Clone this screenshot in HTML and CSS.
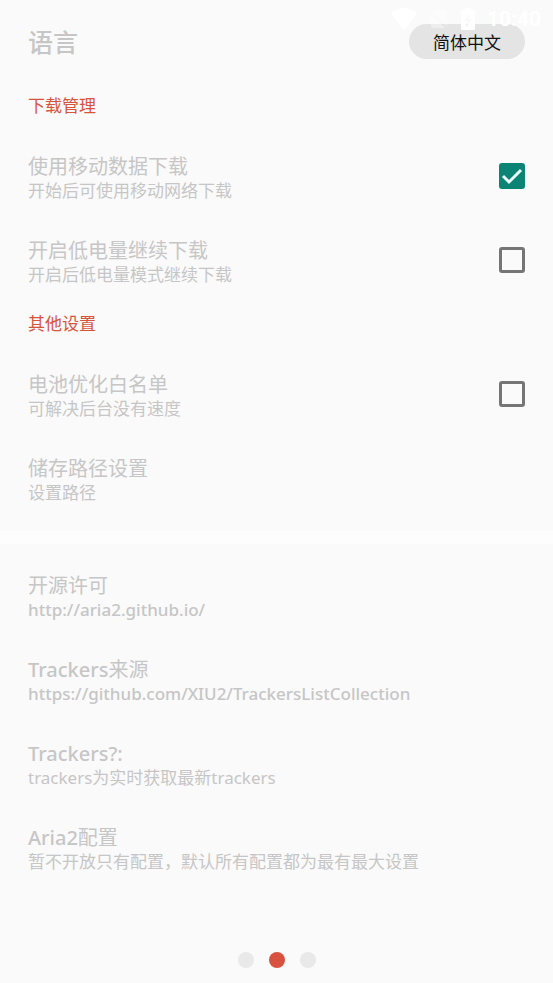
FILE: index.html
```html
<!DOCTYPE html>
<html lang="zh-CN">
<head>
<meta charset="utf-8">
<meta name="viewport" content="width=device-width, initial-scale=1">
<title>设置</title>
<link rel="stylesheet" href="styles.css">
</head>
<body>

<div class="statusbar">
	<svg class="wifi" viewBox="0 0 26 22" aria-hidden="true"><path d="M0 5Q13-5 26 5L13 22Z"/></svg>
	<svg class="nosim" viewBox="0 0 16 20" aria-hidden="true"><path d="M5 1h9q2 0 2 2v14L3 4ZM0 5l14 14H2q-2 0-2-2Z"/></svg>
	<svg class="battery" viewBox="0 0 14 22" aria-hidden="true"><path fill-rule="evenodd" d="M4 0h6v2h3q1 0 1 1v18q0 1-1 1H1q-1 0-1-1V3q0-1 1-1h3ZM9 5L3 13h3l-1 6l6-8H8Z"/></svg>
	<span class="clock">10:40</span>
</div>

<header class="header">
	<h1>语言</h1>
	<button class="lang" type="button">简体中文</button>
</header>

<main>
	<h2 class="section">下载管理</h2>
	<div class="row">
		<label class="text" for="mobile">
			<span class="name">使用移动数据下载</span>
			<span class="desc">开始后可使用移动网络下载</span>
		</label>
		<input class="check" type="checkbox" id="mobile" checked>
	</div>
	<div class="row">
		<label class="text" for="lowpower">
			<span class="name">开启低电量继续下载</span>
			<span class="desc">开启后低电量模式继续下载</span>
		</label>
		<input class="check" type="checkbox" id="lowpower">
	</div>

	<h2 class="section">其他设置</h2>
	<div class="row">
		<label class="text" for="whitelist">
			<span class="name">电池优化白名单</span>
			<span class="desc">可解决后台没有速度</span>
		</label>
		<input class="check" type="checkbox" id="whitelist">
	</div>
	<div class="row">
		<div class="text">
			<span class="name">储存路径设置</span>
			<span class="desc">设置路径</span>
		</div>
	</div>

	<hr class="band">

	<a class="row" href="http://aria2.github.io/">
		<span class="text">
			<span class="name">开源许可</span>
			<span class="desc latin">http://aria2.github.io/</span>
		</span>
	</a>
	<a class="row" href="https://github.com/XIU2/TrackersListCollection">
		<span class="text">
			<span class="name"><span class="latin">Trackers</span>来源</span>
			<span class="desc latin">https://github.com/XIU2/TrackersListCollection</span>
		</span>
	</a>
	<div class="row">
		<div class="text">
			<span class="name latin">Trackers?:</span>
			<span class="desc">trackers为实时获取最新trackers</span>
		</div>
	</div>
	<div class="row">
		<div class="text">
			<span class="name"><span class="latin">Aria2</span>配置</span>
			<span class="desc">暂不开放只有配置，默认所有配置都为最有最大设置</span>
		</div>
	</div>
</main>

<nav class="dots">
	<button type="button" class="dot" aria-label="1"></button>
	<button type="button" class="dot active" aria-label="2"></button>
	<button type="button" class="dot" aria-label="3"></button>
</nav>

</body>
</html>
```
FILE: styles.css
```css
* {
	box-sizing: border-box;
}

body {
	margin: 0;
	min-height: 100vh;
	display: flex;
	flex-direction: column;
	background: #fafafa;
	color: #c6c6c6;
	font-family: "Noto Sans", "Noto Sans CJK SC", sans-serif;
}

/* system icons, drawn over the header */
.statusbar {
	position: absolute;
	top: 7px;
	right: 12px;
	display: flex;
	align-items: center;
	color: #fff;
	pointer-events: none;
}

.statusbar svg {
	fill: #fff;
}

.wifi {
	width: 26px;
	height: 22px;
	margin-right: 14px;
}

.nosim {
	width: 16px;
	height: 20px;
	margin-right: 14px;
	opacity: 0.4;
}

.battery {
	width: 14px;
	height: 22px;
	margin-right: 12px;
}

.clock {
	font: 700 21px/24px Roboto, sans-serif;
}

.header {
	display: flex;
	align-items: center;
	justify-content: space-between;
	padding: 23px 28px 27px;
}

h1 {
	margin: 0;
	padding-top: 2px;
	font-size: 25px;
	line-height: 35px;
	font-weight: 500;
}

.lang {
	width: 116px;
	height: 35px;
	border: 0;
	border-radius: 18px;
	background: #e4e4e4;
	color: #111;
	font-family: inherit;
	font-size: 17px;
}

.section {
	margin: 7px 28px 19px;
	color: #d8533b;
	font-size: 17px;
	line-height: 24px;
	font-weight: 400;
}

.row {
	display: flex;
	justify-content: space-between;
	align-items: center;
	padding: 18px 28px;
	color: inherit;
	text-decoration: none;
}

.text {
	display: flex;
	flex-direction: column;
}

.name {
	font-size: 20px;
	line-height: 24px;
}

.desc {
	font-size: 17px;
	line-height: 24px;
}

.latin {
	font-weight: 500;
}

.check {
	appearance: none;
	width: 26px;
	height: 26px;
	margin: 0 0 6px;
	border: 3px solid #757575;
	border-radius: 3px;
}

.check:checked {
	border: 0;
	background: #0b8375 url("data:image/svg+xml,%3Csvg xmlns='http://www.w3.org/2000/svg' viewBox='0 0 26 26'%3E%3Cpath d='M4 13l6 6L22 7' fill='none' stroke='%23e8fffc' stroke-width='3'/%3E%3C/svg%3E");
}

.band {
	width: 100%;
	height: 13px;
	margin: 8px 0 12px;
	border: 0;
	background: #fdfdfd;
}

.dots {
	display: flex;
	justify-content: center;
	gap: 15px;
	margin-top: auto;
	padding: 15px;
}

.dot {
	width: 16px;
	height: 16px;
	padding: 0;
	border: 0;
	border-radius: 50%;
	background: #e9e9e9;
}

.dot.active {
	background: #d9523f;
}
```
